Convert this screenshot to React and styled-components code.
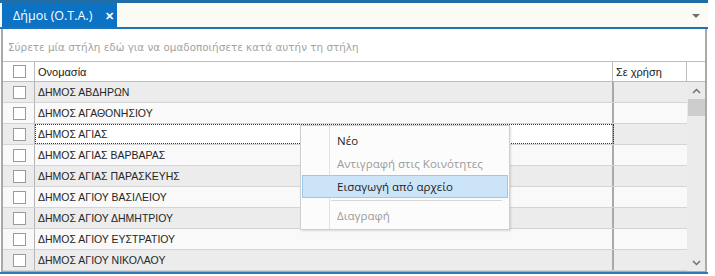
import React from 'react'
import styled, { createGlobalStyle } from 'styled-components'

const GlobalStyle = createGlobalStyle`
  html, body {
    margin: 0;
    padding: 0;
    background: #ffffff;
  }
`

const Page = styled.div`
  position: relative;
  width: 715px;
  height: 276px;
  overflow: hidden;
  background: #ffffff;
  font-family: "Liberation Sans", Arial, sans-serif;
`

const TabStrip = styled.div`
  width: 708px;
  height: 24px;
  display: flex;
  align-items: stretch;
  background: #fbfbf5;
  border-top: 3px solid #1f6ea8;
  border-bottom: 2px solid #1f72b4;
`

const Tab = styled.div`
  margin-left: 2px;
  width: 115px;
  display: flex;
  align-items: center;
  padding-left: 11px;
  box-sizing: border-box;
  background: #0b72c4;
  color: #ffffff;
  font-family: "Open Sans", "Noto Sans", sans-serif;
  font-size: 12.5px;
`

const TabClose = styled.span`
  margin-left: 13px;
  font-size: 11px;
  font-weight: 700;
`

const TabSpacer = styled.div`
  flex: 1;
  display: flex;
  align-items: center;
  justify-content: flex-end;
  padding-right: 8px;
`

const DropArrow = styled.div`
  width: 0;
  height: 0;
  border-left: 4px solid transparent;
  border-right: 4px solid transparent;
  border-top: 4px solid #6e6e6e;
  margin-top: 2px;
`

const Grid = styled.div`
  margin-left: 1px;
  width: 706px;
  box-sizing: border-box;
  border-left: 2px solid #a9a9a9;
  border-right: 2px solid #a9a9a9;
  border-bottom: 1px solid #a9a9a9;
`

const GroupPanel = styled.div`
  height: 32px;
  display: flex;
  align-items: center;
  padding-left: 5px;
  padding-top: 4px;
  box-sizing: border-box;
  background: #ffffff;
  color: #a3a3a3;
  font-family: "DejaVu Sans", sans-serif;
  font-size: 10.4px;
`

const HeaderRow = styled.div`
  display: grid;
  grid-template-columns: 32px 578px 74px 18px;
  height: 21px;
  box-sizing: border-box;
  border-top: 1px solid #bdbdbd;
  border-bottom: 1px solid #bdbdbd;
  background: #ffffff;
  font-size: 11px;
  color: #202020;
`

const HeadCell = styled.div`
  display: flex;
  align-items: center;
  justify-content: ${p => (p.$center ? 'center' : 'flex-start')};
  padding-left: ${p => (p.$center ? '0' : '3px')};
  border-right: ${p => (p.$last ? 'none' : '1px solid #bdbdbd')};
  box-sizing: border-box;
`

const Body = styled.div`
  display: flex;
`

const Rows = styled.div`
  width: 684px;
`

const Row = styled.div`
  display: grid;
  grid-template-columns: 32px 579px 73px;
  height: 21px;
  box-sizing: border-box;
  border-bottom: 1px solid #d4d4d4;
  background: ${p => (p.$alt ? '#ececec' : '#f9f9f9')};
  font-size: 10.5px;
  color: #262626;
`

const Cell = styled.div`
  display: flex;
  align-items: center;
  justify-content: ${p => (p.$center ? 'center' : 'flex-start')};
  padding-left: ${p => (p.$center ? '0' : '3px')};
  box-sizing: border-box;
  border-right: ${p => p.$sep || 'none'};
  background: ${p => (p.$focused ? '#ffffff' : 'transparent')};
  outline: ${p => (p.$focused ? '1px dotted #333' : 'none')};
  outline-offset: -1px;
`

const Check = styled.span`
  width: 13px;
  height: 13px;
  box-sizing: border-box;
  border: 1px solid #9a9a9a;
  background: #ffffff;
  margin-left: 1px;
`

const ScrollBar = styled.div`
  width: 18px;
  display: flex;
  flex-direction: column;
  align-items: center;
  background: #ebebeb;
`

const ScrollBtn = styled.div`
  height: 17px;
  display: flex;
  align-items: center;
  justify-content: center;
  color: #777;
`

const Thumb = styled.div`
  width: 17px;
  height: 17px;
  background: #cdcdcd;
  margin-left: 1px;
`

const ScrollTrack = styled.div`
  flex: 1;
`

const BottomLine = styled.div`
  width: 708px;
  height: 2px;
  background: #2a7bb8;
`

const Menu = styled.div`
  position: absolute;
  left: 300px;
  top: 125px;
  width: 210px;
  box-sizing: border-box;
  padding: 2px 1px;
  background: #fcfcfc;
  border: 1px solid #cfcfcf;
  box-shadow: 1px 1px 2px rgba(0, 0, 0, 0.12);
  font-family: "Open Sans", "Noto Sans", sans-serif;
  font-size: 11.5px;
`

const MenuGutter = styled.div`
  position: absolute;
  left: 28px;
  top: 0;
  bottom: 0;
  width: 1px;
  background: #e2e2e2;
`

const MenuItem = styled.div`
  position: relative;
  height: ${p => (p.$h || 23)}px;
  display: flex;
  align-items: center;
  padding-left: 34px;
  box-sizing: border-box;
  color: ${p => (p.$disabled ? '#9b9b9b' : '#1e1e1e')};
  background: ${p => (p.$active ? '#cce4f7' : 'transparent')};
  border: 1px solid ${p => (p.$active ? '#99c9ef' : 'transparent')};
`

const MenuSep = styled.div`
  position: relative;
  height: 1px;
  margin: 2px 6px 2px 29px;
  background: #d7d7d7;
`

const Chevron = ({ up }) => (
  <svg width="9" height="6" viewBox="0 0 9 6">
    <path
      d={up ? 'M1 5 L4.5 1.5 L8 5' : 'M1 1 L4.5 4.5 L8 1'}
      fill="none"
      stroke="#707070"
      strokeWidth="1.5"
    />
  </svg>
)

const municipalities = [
  'ΔΗΜΟΣ ΑΒΔΗΡΩΝ',
  'ΔΗΜΟΣ ΑΓΑΘΟΝΗΣΙΟΥ',
  'ΔΗΜΟΣ ΑΓΙΑΣ',
  'ΔΗΜΟΣ ΑΓΙΑΣ ΒΑΡΒΑΡΑΣ',
  'ΔΗΜΟΣ ΑΓΙΑΣ ΠΑΡΑΣΚΕΥΗΣ',
  'ΔΗΜΟΣ ΑΓΙΟΥ ΒΑΣΙΛΕΙΟΥ',
  'ΔΗΜΟΣ ΑΓΙΟΥ ΔΗΜΗΤΡΙΟΥ',
  'ΔΗΜΟΣ ΑΓΙΟΥ ΕΥΣΤΡΑΤΙΟΥ',
  'ΔΗΜΟΣ ΑΓΙΟΥ ΝΙΚΟΛΑΟΥ'
]

export default function App() {
  return (
    <Page>
      <GlobalStyle />
      <TabStrip>
        <Tab>
          Δήμοι (Ο.Τ.Α.)
          <TabClose>✕</TabClose>
        </Tab>
        <TabSpacer>
          <DropArrow />
        </TabSpacer>
      </TabStrip>

      <Grid>
        <GroupPanel>Σύρετε μία στήλη εδώ για να ομαδοποιήσετε κατά αυτήν τη στήλη</GroupPanel>
        <HeaderRow>
          <HeadCell $center><Check /></HeadCell>
          <HeadCell>Ονομασία</HeadCell>
          <HeadCell>Σε χρήση</HeadCell>
          <HeadCell $last />
        </HeaderRow>
        <Body>
          <Rows>
            {municipalities.map((name, i) => (
              <Row key={name} $alt={i % 2 === 0}>
                <Cell $center $sep="1px solid #b5b5b5"><Check /></Cell>
                <Cell $sep="2px solid #a9a9a9" $focused={i === 2}>{name}</Cell>
                <Cell />
              </Row>
            ))}
          </Rows>
          <ScrollBar>
            <ScrollBtn><Chevron up /></ScrollBtn>
            <Thumb />
            <ScrollTrack />
            <ScrollBtn><Chevron /></ScrollBtn>
          </ScrollBar>
        </Body>
      </Grid>
      <BottomLine />

      <Menu>
        <MenuGutter />
        <MenuItem $h={24}>Νέο</MenuItem>
        <MenuItem $disabled>Αντιγραφή στις Κοινότητες</MenuItem>
        <MenuItem $active>Εισαγωγή από αρχείο</MenuItem>
        <MenuSep />
        <MenuItem $disabled $h={24}>Διαγραφή</MenuItem>
      </Menu>
    </Page>
  )
}
